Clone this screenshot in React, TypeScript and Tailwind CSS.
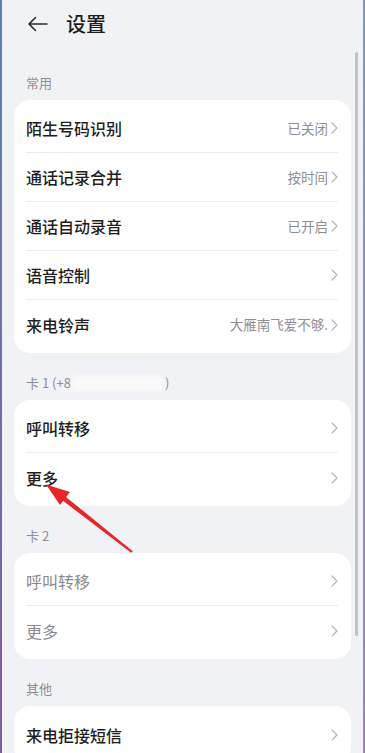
import React from 'react'

type Row = { label: string; value?: string; muted?: boolean }

const sections: { title: React.ReactNode; rows: Row[]; first?: boolean }[] = [
  {
    title: '常用',
    first: true,
    rows: [
      { label: '陌生号码识别', value: '已关闭' },
      { label: '通话记录合并', value: '按时间' },
      { label: '通话自动录音', value: '已开启' },
      { label: '语音控制' },
      { label: '来电铃声', value: '大雁南飞爱不够.' },
    ],
  },
  {
    title: (
      <span className="flex items-center">
        卡 1 (+8
        <span className="mx-[1px] inline-block h-[15px] w-[92px] rounded-sm bg-[#fafafb] blur-[2px]" />
        )
      </span>
    ),
    rows: [{ label: '呼叫转移' }, { label: '更多' }],
  },
  {
    title: '卡 2',
    rows: [
      { label: '呼叫转移', muted: true },
      { label: '更多', muted: true },
    ],
  },
  {
    title: '其他',
    rows: [{ label: '来电拒接短信' }],
  },
]

function Chevron() {
  return (
    <svg width="7" height="12" viewBox="0 0 7 12" fill="none" className="shrink-0">
      <path d="M1 1l5 5-5 5" stroke="#b4b4b8" strokeWidth="1.2" strokeLinecap="round" strokeLinejoin="round" />
    </svg>
  )
}

export default function App() {
  return (
    <div
      className="relative flex h-[753px] w-[365px] overflow-hidden bg-[#f1f2f5]"
      style={{ fontFamily: '"Noto Sans CJK SC", "Noto Sans", sans-serif' }}
    >
      <div className="w-[2px] shrink-0 bg-gradient-to-b from-[#5a82b8] to-[#7d5aa8]" />
      <div className="flex-1">
        {/* Header */}
        <div className="flex h-12 items-center pl-[25px]">
          <svg width="22" height="16" viewBox="0 0 22 16" fill="none">
            <path d="M20 8H2M8.5 1.5L2 8l6.5 6.5" stroke="#2a2a2a" strokeWidth="1.6" strokeLinecap="round" strokeLinejoin="round" />
          </svg>
          <span className="ml-[17px] text-[20px] font-medium text-[#1c1c1c]">设置</span>
        </div>

        {sections.map((s, i) => (
          <div key={i}>
            <div className={`${s.first ? 'pt-[26px]' : 'pt-[21px]'} pb-2 pl-6 text-[13px] leading-[18px] text-[#8e8e93]`}>
              {s.title}
            </div>
            <div className="mx-3 rounded-2xl bg-white py-1">
              {s.rows.map((r, j) => (
                <div key={j} className="pl-3 pr-[13px]">
                  <div
                    className={`flex h-[49px] items-center justify-between ${
                      j < s.rows.length - 1 ? 'border-b border-[#ececee]' : ''
                    }`}
                  >
                    <span className={`text-[16px] font-medium ${r.muted ? 'font-normal text-[#8a8a8e]' : 'text-[#1e1e1e]'}`}>
                      {r.label}
                    </span>
                    <span className="flex items-center gap-[3px]">
                      {r.value && <span className="text-[13.5px] text-[#8e8e93]">{r.value}</span>}
                      <Chevron />
                    </span>
                  </div>
                </div>
              ))}
            </div>
          </div>
        ))}
      </div>
      <div className="w-[2px] shrink-0 bg-gradient-to-b from-[#7b93c4] to-[#9b7fc0]" />

      {/* scrollbar */}
      <div className="absolute left-[355px] top-[52px] h-[584px] w-[2.5px] rounded-full bg-[#c2c2c6]" />

      {/* annotation arrow */}
      <svg className="pointer-events-none absolute left-0 top-0" width="365" height="753" viewBox="0 0 365 753">
        <polygon points="132.8,551.2 131.2,552.8 62.3,500.3 65.3,496.4" fill="#e8262a" />
        <polygon points="46,484.5 70,492 60,505" fill="#e8262a" />
      </svg>
    </div>
  )
}
